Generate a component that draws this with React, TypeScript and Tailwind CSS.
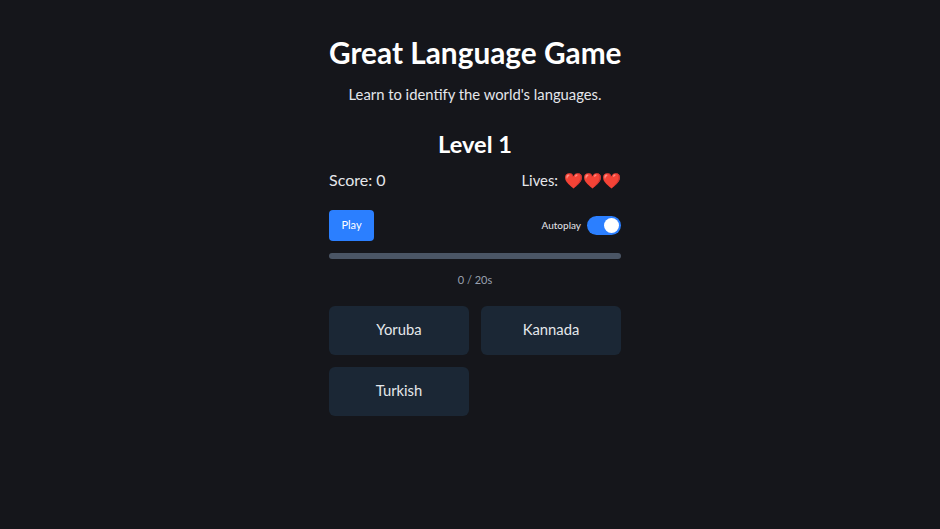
export default function App() {
  return (
    <div className="min-h-screen bg-[#15161b] pl-[10px] font-['Lato',sans-serif] text-white">
      <div className="mx-auto flex w-[292px] flex-col pt-[34px]">
        <h1 className="whitespace-nowrap text-center text-[29.8px] font-bold leading-[38px]">Great Language Game</h1>
        <p className="mt-[10px] whitespace-nowrap text-center text-[14.8px] leading-6 text-gray-200">Learn to identify the world's languages.</p>
        <h2 className="mt-[22px] text-center text-[23.6px] font-bold leading-8">Level 1</h2>
        <div className="mt-[8px] flex items-center justify-between text-base leading-6 text-gray-200">
          <span>Score: 0</span>
          <span className="flex items-center gap-[6px] text-[14.8px]">
            Lives:
            <span className="text-[15.2px]">❤️❤️❤️</span>
          </span>
        </div>
        <div className="mt-[18px] flex items-center justify-between">
          <button type="button" className="h-[31px] w-[45px] rounded-sm bg-[#2b7fff] text-[11px]">Play</button>
          <label className="flex items-center gap-[6px] text-[10px] text-gray-200">
            Autoplay
            <span className="flex h-[19px] w-[34px] items-center justify-end rounded-full bg-[#2b7fff] pr-[2px]">
              <span className="size-[15px] rounded-full bg-white" />
            </span>
          </label>
        </div>
        <div className="mt-3 h-[6px] rounded-full bg-[#4a5565]" />
        <p className="mt-[13px] text-center text-[11px] leading-4 text-gray-400">0 / 20s</p>
        <div className="mt-[18px] grid grid-cols-2 gap-3">
          {["Yoruba", "Kannada", "Turkish"].map(lang => (
            <button key={lang} type="button" className="h-[49px] rounded-md bg-[#1b2735] pb-[2px] text-[14.8px] text-gray-200">
              {lang}
            </button>
          ))}
        </div>
      </div>
    </div>
  );
}
